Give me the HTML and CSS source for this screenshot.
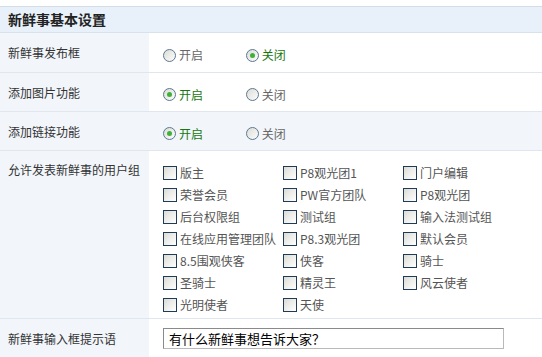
FILE: index.html
```html
<!DOCTYPE html>
<html lang="zh-CN">
<head>
    <meta charset="UTF-8">
    <title>新鲜事基本设置</title>
    <link rel="stylesheet" href="styles.css">
</head>
<body>
    <div class="panel">
        <h3 class="panel-title">新鲜事基本设置</h3>
        <table class="settings">
            <tr>
                <th>新鲜事发布框</th>
                <td>
                    <label class="opt"><span class="radio"></span>开启</label>
                    <label class="opt on"><span class="radio checked"></span>关闭</label>
                </td>
            </tr>
            <tr>
                <th>添加图片功能</th>
                <td>
                    <label class="opt on"><span class="radio checked"></span>开启</label>
                    <label class="opt"><span class="radio"></span>关闭</label>
                </td>
            </tr>
            <tr class="hover">
                <th>添加链接功能</th>
                <td>
                    <label class="opt on"><span class="radio checked"></span>开启</label>
                    <label class="opt"><span class="radio"></span>关闭</label>
                </td>
            </tr>
            <tr class="groups-row">
                <th>允许发表新鲜事的用户组</th>
                <td>
                    <div class="groups">
                        <label class="chk"><span class="box"></span>版主</label>
                        <label class="chk"><span class="box"></span>P8观光团1</label>
                        <label class="chk"><span class="box"></span>门户编辑</label>
                        <label class="chk"><span class="box"></span>荣誉会员</label>
                        <label class="chk"><span class="box"></span>PW官方团队</label>
                        <label class="chk"><span class="box"></span>P8观光团</label>
                        <label class="chk"><span class="box"></span>后台权限组</label>
                        <label class="chk"><span class="box"></span>测试组</label>
                        <label class="chk"><span class="box"></span>输入法测试组</label>
                        <label class="chk"><span class="box"></span>在线应用管理团队</label>
                        <label class="chk"><span class="box"></span>P8.3观光团</label>
                        <label class="chk"><span class="box"></span>默认会员</label>
                        <label class="chk"><span class="box"></span>8.5围观侠客</label>
                        <label class="chk"><span class="box"></span>侠客</label>
                        <label class="chk"><span class="box"></span>骑士</label>
                        <label class="chk"><span class="box"></span>圣骑士</label>
                        <label class="chk"><span class="box"></span>精灵王</label>
                        <label class="chk"><span class="box"></span>风云使者</label>
                        <label class="chk"><span class="box"></span>光明使者</label>
                        <label class="chk"><span class="box"></span>天使</label>
                    </div>
                </td>
            </tr>
            <tr class="last">
                <th>新鲜事输入框提示语</th>
                <td><input class="text" type="text" value="有什么新鲜事想告诉大家？"></td>
            </tr>
        </table>
    </div>
</body>
</html>
```

FILE: styles.css
```css
* {
    box-sizing: border-box;
}

body {
    margin: 0;
    padding-top: 6px;
    background: #fff;
    font-family: "Noto Sans CJK SC", "Noto Sans", sans-serif;
    font-size: 12px;
    color: #333;
}

.panel-title {
    margin: 0;
    height: 27px;
    padding: 0 0 0 8px;
    line-height: 25px;
    font-size: 14px;
    font-weight: bold;
    color: #222;
    background: #e8f1fa;
    border-top: 1px solid #d3dde8;
    border-bottom: 1px solid #d8e2ec;
}

.settings {
    width: 100%;
    border-collapse: collapse;
}

.settings th,
.settings td {
    border-bottom: 1px solid #dfe6ee;
    padding: 0;
    vertical-align: top;
}

.settings th {
    width: 149px;
    background: #f2f6fb;
    font-weight: normal;
    text-align: left;
    padding: 11px 0 0 8px;
    color: #333;
}

.settings tr {
    height: 39px;
}

.settings td {
    padding: 14px 0 0 14px;
}

.settings tr.hover td {
    background: #f2f6fb;
}

.settings tr.last th,
.settings tr.last td {
    border-bottom: 0;
}

.opt {
    display: inline-flex;
    align-items: center;
    width: 80px;
    color: #666;
    line-height: 16px;
}

.opt.on {
    color: #16780f;
}

.radio {
    width: 13px;
    height: 13px;
    margin-right: 3px;
    border: 1px solid #5b7892;
    border-radius: 50%;
    background: linear-gradient(135deg, #dcdcd6, #fdfdfd);
    position: relative;
}

.radio.checked::after {
    content: "";
    position: absolute;
    left: 3px;
    top: 3px;
    width: 5px;
    height: 5px;
    border-radius: 50%;
    background: #3fb03a;
}

.groups-row th {
    padding-top: 10px;
}

.groups-row td {
    padding: 11px 0 2px 14px;
}

.groups {
    display: grid;
    grid-template-columns: 120px 120px 120px;
    grid-auto-rows: 22px;
}

.chk {
    display: flex;
    align-items: center;
    color: #555;
}

.box {
    width: 14px;
    height: 14px;
    margin-right: 3px;
    border: 1px solid #1f3b58;
    background: linear-gradient(135deg, #dcdcd6, #fff);
}

.settings tr.last td {
    padding: 9px 0 0 14px;
}

.text {
    width: 341px;
    height: 21px;
    padding: 0 5px;
    border: 1px solid #b9b9b9;
    border-top-color: #8a8a8a;
    border-left-color: #8a8a8a;
    font-family: "Noto Sans CJK SC", sans-serif;
    font-size: 13px;
    color: #000;
}
```
